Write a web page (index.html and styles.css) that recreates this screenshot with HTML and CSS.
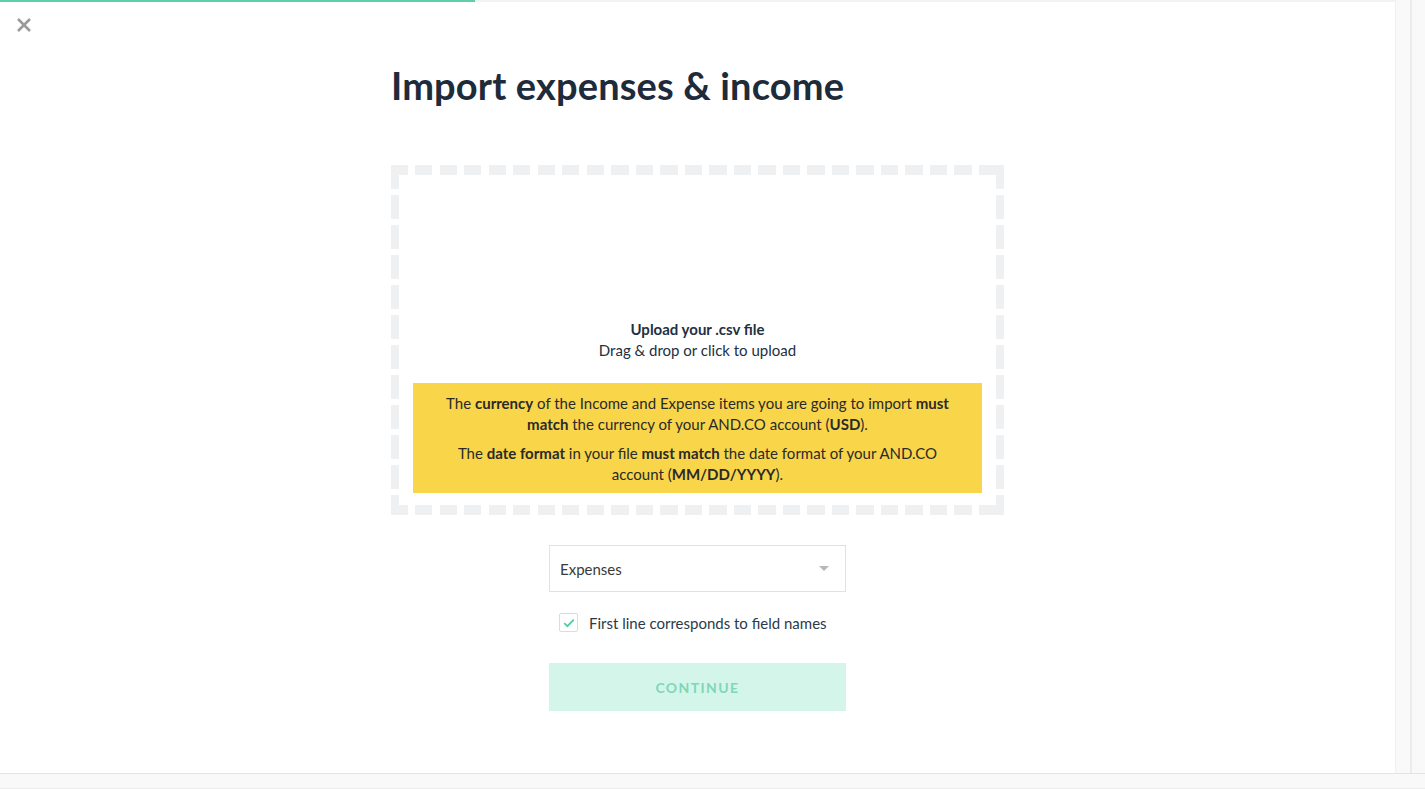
FILE: index.html
```html
<!DOCTYPE html>
<html lang="en">
<head>
<meta charset="utf-8">
<title>Import expenses &amp; income</title>
<link rel="stylesheet" href="styles.css">
</head>
<body>
<div class="app">
  <div class="main">
    <div class="progress"><div class="progress-fill"></div></div>
    <button class="close" aria-label="Close">
      <svg width="16" height="16" viewBox="0 0 16 16"><path d="M2 2 L14 14 M14 2 L2 14" stroke="#9a9a9a" stroke-width="2.6" stroke-linecap="butt"/></svg>
    </button>
    <div class="content">
      <h1 class="title">Import expenses &amp; income</h1>
      <div class="dropzone">
        <div class="upload-text">
          <div class="upload-title">Upload your .csv file</div>
          <div class="upload-sub">Drag &amp; drop or click to upload</div>
        </div>
        <div class="notice">
          <p class="notice-line">The <strong>currency</strong> of the Income and Expense items you are going to import <strong>must match</strong> the currency of your AND.CO account (<strong>USD</strong>).</p>
          <p class="notice-line">The <strong>date format</strong> in your file <strong>must match</strong> the date format of your AND.CO account (<strong>MM/DD/YYYY</strong>).</p>
        </div>
      </div>
      <div class="form">
        <div class="select">
          <span>Expenses</span>
          <span class="caret"></span>
        </div>
        <label class="check-row">
          <span class="checkbox">
            <svg width="12" height="10" viewBox="0 0 12 10"><path d="M1.2 5.2 L4.4 8.2 L10.8 1.6" fill="none" stroke="#4fcd9e" stroke-width="1.8"/></svg>
          </span>
          <span class="check-label">First line corresponds to field names</span>
        </label>
        <button class="continue">CONTINUE</button>
      </div>
    </div>
  </div>
  <div class="rail"><div class="rail-inner"></div></div>
  <div class="bottom"></div>
</div>
</body>
</html>
```
FILE: styles.css
```css
* { box-sizing: border-box; }
html, body { margin: 0; padding: 0; }
body {
  font-family: Lato, "Open Sans", "Liberation Sans", sans-serif;
  color: #23303f;
  background: #fff;
  overflow: hidden;
}
.app {
  width: 1425px;
  height: 789px;
  display: grid;
  grid-template-columns: 1395px 30px;
  grid-template-rows: 774px 15px;
}
.main {
  grid-column: 1;
  grid-row: 1;
  background: #fff;
  border-bottom: 1px solid #e4e4e4;
  display: flex;
  flex-direction: column;
}
.progress {
  height: 2px;
  background: #f2f2f2;
  flex: none;
}
.progress-fill {
  width: 475px;
  height: 100%;
  background: #5ecfa9;
}
.close {
  border: 0;
  background: none;
  padding: 0;
  margin: 15px 0 0 16px;
  width: 16px;
  height: 16px;
  display: block;
  cursor: pointer;
}
.close svg { display: block; }
.content {
  width: 613px;
  margin: 0 auto;
  display: flex;
  flex-direction: column;
}
.title {
  margin: 28px 0 0 0;
  font-size: 38px;
  line-height: 48px;
  font-weight: 700;
  color: #1e2b3a;
  letter-spacing: 0.15px;
}
.dropzone {
  margin-top: 56px;
  height: 350px;
  display: flex;
  flex-direction: column;
  justify-content: flex-end;
  padding: 0 22px 22px 22px;
  background:
    repeating-linear-gradient(90deg, #eef0f2 0 17px, transparent 17px 24.5px) left top / 100% 10px no-repeat,
    repeating-linear-gradient(90deg, #eef0f2 0 17px, transparent 17px 24.5px) left bottom / 100% 10px no-repeat,
    repeating-linear-gradient(180deg, #eef0f2 0 24px, transparent 24px 30px) left top / 8px 100% no-repeat,
    repeating-linear-gradient(180deg, #eef0f2 0 24px, transparent 24px 30px) right top / 8px 100% no-repeat;
  cursor: pointer;
}
.upload-text {
  text-align: center;
  font-size: 15px;
  line-height: 21px;
  color: #23303f;
  margin-bottom: 22px;
}
.upload-title { font-weight: 700; }
.notice {
  background: #f9d54a;
  padding: 10px 20px 8px 20px;
  text-align: center;
  font-size: 15px;
  line-height: 21px;
  color: #2a2a2a;
}
.notice-line { margin: 0; }
.notice-line + .notice-line { margin-top: 8px; }
.notice-line strong { font-weight: 700; }
.form {
  width: 297px;
  margin: 30px auto 0 auto;
  display: flex;
  flex-direction: column;
}
.select {
  height: 47px;
  border: 1px solid #e2e2e2;
  display: flex;
  align-items: center;
  justify-content: space-between;
  padding: 0 16px 0 10px;
  font-size: 15px;
  color: #3a3a3a;
}
.caret {
  width: 0;
  height: 0;
  border-left: 5px solid transparent;
  border-right: 5px solid transparent;
  border-top: 5px solid #b8b8b8;
}
.check-row {
  display: flex;
  align-items: center;
  margin: 21px 0 0 10px;
  cursor: pointer;
}
.checkbox {
  width: 19px;
  height: 19px;
  border: 1px solid #dcdcdc;
  border-radius: 2px;
  display: flex;
  align-items: center;
  justify-content: center;
  flex: none;
}
.checkbox svg { display: block; }
.check-label {
  margin-left: 11px;
  font-size: 15px;
  color: #2c3a48;
}
.continue {
  margin-top: 31px;
  height: 48px;
  border: 0;
  background: #d3f5ea;
  color: #7fd7b8;
  font-family: inherit;
  font-weight: 700;
  font-size: 14px;
  letter-spacing: 1.4px;
  cursor: default;
}
.rail {
  grid-column: 2;
  grid-row: 1;
  background: #f9f9f9;
  border-left: 1px solid #f0f0f0;
  padding-left: 14px;
  border-bottom: 1px solid #e4e4e4;
}
.rail-inner {
  width: 2px;
  height: 100%;
  background: #ececec;
}
.bottom {
  grid-column: 1 / span 2;
  grid-row: 2;
  background: #f9f9f9;
  border-bottom: 1px solid #ececec;
}
```
